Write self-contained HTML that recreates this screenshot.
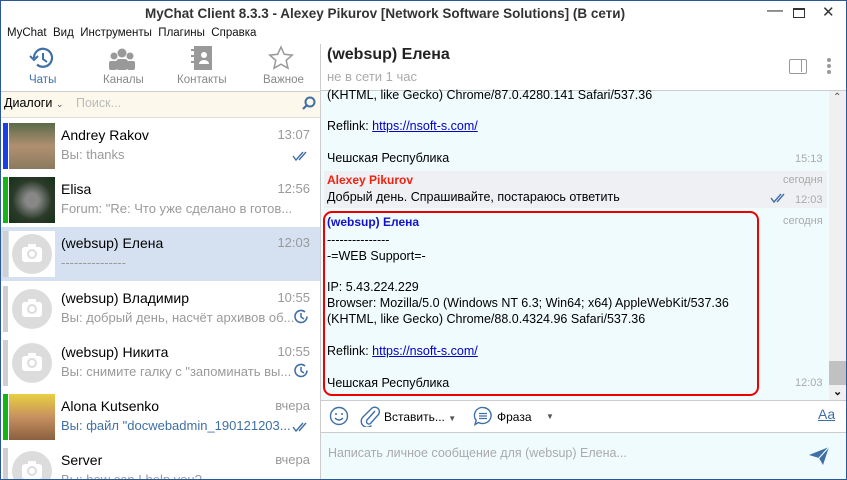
<!DOCTYPE html>
<html><head><meta charset="utf-8"><style>
*{margin:0;padding:0;box-sizing:border-box}
html,body{width:847px;height:480px;overflow:hidden}
body{font-family:"Liberation Sans","Noto Sans CJK SC",sans-serif;font-size:12px;background:#fff;color:#000}
#w{position:relative;width:847px;height:480px;overflow:hidden}
.a{position:absolute;white-space:nowrap}
.frame{position:absolute;left:0;top:0;width:847px;height:480px;border:1px solid #2b5797;pointer-events:none}
.g{color:#9a9a9a}
.row{position:absolute;left:0;width:320px;height:54px}
.bar{position:absolute;left:3px;top:4px;width:5px;height:46px}
.av{position:absolute;left:9px;top:4px;width:46px;height:46px;background:#fff}
.av .c{position:absolute;left:3px;top:3px;width:40px;height:40px;border-radius:50%;background:#dcdcdc}
.av .c i{position:absolute;left:10px;top:13px;width:20px;height:15px;background:#fff;border-radius:3px}
.av .c i:before{content:"";position:absolute;left:5px;top:2px;width:6px;height:6px;border-radius:50%;border:2.5px solid #dcdcdc}
.av .c i:after{content:"";position:absolute;left:6px;top:-3px;width:8px;height:4px;background:#fff;border-radius:1px}
.nm{position:absolute;left:61px;top:8px;font-size:14px}
.tm{position:absolute;right:10px;top:8px;font-size:13px;color:#999}
.pv{position:absolute;left:61px;top:28px;font-size:13px;color:#9a9a9a}
.ck{position:absolute;right:10px;top:32px}
.m{position:absolute;left:327px;font-size:12.5px}
</style></head><body><div id="w">
<div class="a" style="left:145px;top:6px;font-size:13.5px;font-weight:bold;color:#333">MyChat Client 8.3.3 - Alexey Pikurov [Network Software Solutions] (В сети)</div>
<div class="a" style="left:767px;top:2px;font-size:16px;color:#333">&#8212;</div>
<div class="a" style="left:793px;top:8px;width:12px;height:10px;border:1.5px solid #333;border-top-width:2.5px"></div>
<div class="a" style="left:822px;top:3px;font-size:15px;color:#333">&#10005;</div>
<div class="a" style="left:7px;top:27px;font-size:11.5px;color:#111">MyChat &nbsp;Вид &nbsp;Инструменты &nbsp;Плагины &nbsp;Справка</div>
<svg class="a" style="left:28px;top:45px" width="28" height="26" viewBox="0 0 28 26"><path d="M6 13a9 9 0 1 1 3 6.5" fill="none" stroke="#3f6fa7" stroke-width="2.2"/><path d="M2 11l4 4 4-4" fill="none" stroke="#3f6fa7" stroke-width="2"/><path d="M15 8v6l4 3" fill="none" stroke="#3f6fa7" stroke-width="2"/></svg>
<div class="a" style="left:29px;top:74px;font-size:11.5px;color:#3f6fa7">Чаты</div>
<svg class="a" style="left:108px;top:47px" width="28" height="24"><circle cx="14" cy="6" r="4.5" fill="#999"/><circle cx="6" cy="9" r="3.5" fill="#999"/><circle cx="22" cy="9" r="3.5" fill="#999"/><rect x="8" y="12" width="12" height="11" rx="3" fill="#999"/><rect x="1" y="14" width="8" height="9" rx="2" fill="#999"/><rect x="19" y="14" width="8" height="9" rx="2" fill="#999"/></svg>
<div class="a" style="left:103px;top:74px;font-size:11.5px;color:#888">Каналы</div>
<svg class="a" style="left:189px;top:45px" width="26" height="26"><rect x="5" y="1" width="18" height="24" fill="#999"/><rect x="2" y="4" width="5" height="2" fill="#999"/><rect x="2" y="10" width="5" height="2" fill="#999"/><rect x="2" y="16" width="5" height="2" fill="#999"/><circle cx="15" cy="10" r="3" fill="#fff"/><path d="M10 19a5 4 0 0 1 10 0z" fill="#fff"/></svg>
<div class="a" style="left:177px;top:74px;font-size:11.5px;color:#888">Контакты</div>
<svg class="a" style="left:268px;top:45px" width="26" height="26"><path d="M13 2l3.3 7.3 7.9.8-6 5.3 1.8 7.8L13 19.2 6 23.2l1.8-7.8-6-5.3 7.9-.8z" fill="none" stroke="#999" stroke-width="1.5"/></svg>
<div class="a" style="left:263px;top:74px;font-size:11.5px;color:#888">Важное</div>
<div class="a" style="left:1px;top:91px;width:319px;height:27px;background:#fdf8ec;border-top:1px solid #ccc;border-bottom:1px solid #ddd"></div>
<div class="a" style="left:4px;top:96px;font-size:12.5px">Диалоги <span style="font-size:9px;color:#555">&#8964;</span></div>
<div class="a" style="left:76px;top:96px;font-size:12.5px;color:#bbb">Поиск...</div>
<svg class="a" style="left:302px;top:96px" width="14" height="14"><circle cx="8" cy="6" r="4.5" fill="none" stroke="#3f6fa7" stroke-width="2"/><path d="M5 9l-4 4" stroke="#3f6fa7" stroke-width="2.2"/></svg>
<div class="a" style="left:320px;top:44px;width:1px;height:436px;background:#ccc"></div>
<div class="row" style="top:119px"><div class="bar" style="background:#1b3fe6"></div><div class="av" style="background:linear-gradient(#5a6a4a,#b09070 50%,#8a7a60)"></div><div class="nm">Andrey Rakov</div><div class="tm">13:07</div><div class="pv">Вы: thanks</div><svg class="ck" width="18" height="11"><path d="M1 5l3 4 7-8M7 9l7-8" fill="none" stroke="#3f6fa7" stroke-width="1.4"/></svg></div>
<div class="row" style="top:173px"><div class="bar" style="background:#16b516"></div><div class="av" style="background:radial-gradient(#888 20%,#2a3a2a 60%,#173017)"></div><div class="nm">Elisa</div><div class="tm">12:56</div><div class="pv">Forum: "Re: Что уже сделано в готов...</div></div>
<div class="row" style="top:227px;background:#d5e1f1"><div class="bar" style="background:#cfcfcf"></div><div class="av"><div class="c"><i></i></div></div><div class="nm">(websup) Елена</div><div class="tm">12:03</div><div class="pv">---------------</div></div>
<div class="row" style="top:282px"><div class="bar" style="background:#cfcfcf"></div><div class="av"><div class="c"><i></i></div></div><div class="nm">(websup) Владимир</div><div class="tm">10:55</div><div class="pv">Вы: добрый день, насчёт архивов об...</div><svg class="ck" style="top:26px" width="17" height="17"><path d="M14 8.5a6 6 0 1 1-2-4.5" fill="none" stroke="#3f6fa7" stroke-width="1.6"/><path d="M8 5v4l3 2" fill="none" stroke="#3f6fa7" stroke-width="1.5"/></svg></div>
<div class="row" style="top:336px"><div class="bar" style="background:#cfcfcf"></div><div class="av"><div class="c"><i></i></div></div><div class="nm">(websup) Никита</div><div class="tm">10:55</div><div class="pv">Вы: снимите галку с "запоминать вы...</div><svg class="ck" style="top:26px" width="17" height="17"><path d="M14 8.5a6 6 0 1 1-2-4.5" fill="none" stroke="#3f6fa7" stroke-width="1.6"/><path d="M8 5v4l3 2" fill="none" stroke="#3f6fa7" stroke-width="1.5"/></svg></div>
<div class="row" style="top:390px"><div class="bar" style="background:#16b516"></div><div class="av" style="background:linear-gradient(#e8d040,#c89060 50%,#8a6040)"></div><div class="nm">Alona Kutsenko</div><div class="tm">вчера</div><div class="pv" style="color:#3f6fa7">Вы: файл "docwebadmin_190121203...</div><svg class="ck" width="18" height="11"><path d="M1 5l3 4 7-8M7 9l7-8" fill="none" stroke="#3f6fa7" stroke-width="1.4"/></svg></div>
<div class="row" style="top:444px"><div class="bar" style="background:#cfcfcf"></div><div class="av"><div class="c"><i></i></div></div><div class="nm">Server</div><div class="tm">вчера</div><div class="pv">Вы: how can I help you?</div></div>
<div class="a" style="left:327px;top:46px;font-size:16px;font-weight:bold;color:#222">(websup) Елена</div>
<div class="a" style="left:327px;top:69px;font-size:13px;color:#aaa">не в сети 1 час</div>
<div class="a" style="left:789px;top:59px;width:18px;height:15px;border:1.5px solid #999;border-radius:2px"><div style="position:absolute;right:4px;top:0;width:1.5px;height:12px;background:#999"></div></div>
<div class="a" style="left:827px;top:58px;width:4px;height:4px;border-radius:50%;background:#999;box-shadow:0 6px 0 #999,0 12px 0 #999"></div>
<div class="a" style="left:321px;top:90px;width:526px;height:310px;background:#f0fbfd;border-top:1px solid #ccc"></div>
<div class="a" style="left:829px;top:91px;width:17px;height:309px;background:#f0f0f0"></div>
<div class="a" style="left:829px;top:361px;width:17px;height:24px;background:#c1c1c1"></div>
<div class="a" style="left:833px;top:92px;font-size:10px;color:#555">&#8963;</div>
<div class="a" style="left:833px;top:385px;font-size:11px;color:#111;font-weight:bold">&#8964;</div>
<div class="m" style="top:88px">(KHTML, like Gecko) Chrome/87.0.4280.141 Safari/537.36</div>
<div class="m" style="top:119px">Reflink: <span style="color:#00c;text-decoration:underline">https://nsoft-s.com/</span></div>
<div class="m" style="top:151px">Чешская Республика</div>
<div class="a g" style="left:795px;top:153px;font-size:11px;color:#aaa">15:13</div>
<div class="a" style="left:324px;top:171px;width:503px;height:37px;background:#eef0f3"></div>
<div class="m" style="top:173px;color:#e21;font-weight:bold;font-size:12px">Alexey Pikurov</div>
<div class="a" style="left:783px;top:174px;font-size:11px;color:#aaa">сегодня</div>
<div class="m" style="top:190px">Добрый день. Спрашивайте, постараюсь ответить</div>
<svg class="a" style="left:770px;top:193px" width="18" height="11"><path d="M1 5l3 4 7-8M7 9l7-8" fill="none" stroke="#3f6fa7" stroke-width="1.4"/></svg>
<div class="a" style="left:795px;top:194px;font-size:11px;color:#aaa">12:03</div>
<div class="a" style="left:323px;top:211px;width:436px;height:185px;border:2px solid #e00;border-radius:9px"></div>
<div class="m" style="top:215px;color:#11c;font-weight:bold;font-size:12px">(websup) Елена</div>
<div class="a" style="left:783px;top:215px;font-size:11px;color:#aaa">сегодня</div>
<div class="m" style="top:233px">---------------</div>
<div class="m" style="top:249px">-=WEB Support=-</div>
<div class="m" style="top:280px">IP: 5.43.224.229</div>
<div class="m" style="top:296px">Browser: Mozilla/5.0 (Windows NT 6.3; Win64; x64) AppleWebKit/537.36</div>
<div class="m" style="top:312px">(KHTML, like Gecko) Chrome/88.0.4324.96 Safari/537.36</div>
<div class="m" style="top:344px">Reflink: <span style="color:#00c;text-decoration:underline">https://nsoft-s.com/</span></div>
<div class="m" style="top:376px">Чешская Республика</div>
<div class="a" style="left:795px;top:377px;font-size:11px;color:#aaa">12:03</div>
<div class="a" style="left:321px;top:400px;width:526px;height:1px;background:#ccc"></div>
<svg class="a" style="left:329px;top:406px" width="20" height="20"><circle cx="10" cy="10" r="8.5" fill="none" stroke="#3f6fa7" stroke-width="1.4"/><circle cx="7" cy="8" r="1" fill="#3f6fa7"/><circle cx="13" cy="8" r="1" fill="#3f6fa7"/><path d="M6 12q4 4 8 0" fill="none" stroke="#3f6fa7" stroke-width="1.3"/></svg>
<svg class="a" style="left:360px;top:405px" width="20" height="22"><path d="M15 6L7 15a2.5 2.5 0 0 0 3.5 3.5L18 10a4.5 4.5 0 0 0-6.5-6.5L3 12a6 6 0 0 0 8.5 8.5" fill="none" stroke="#3f6fa7" stroke-width="1.4"/></svg>
<div class="a" style="left:384px;top:410px;font-size:12px">Вставить... <span style="font-size:8px;color:#555">&#9660;</span></div>
<svg class="a" style="left:473px;top:406px" width="20" height="20"><path d="M10 1.5a8.5 8 0 1 1-4.5 15L2 18.5l1.2-4A8 8 0 0 1 10 1.5z" fill="none" stroke="#3f6fa7" stroke-width="1.4"/><path d="M6 7.5h8M6 10h8M6 12.5h8" stroke="#3f6fa7" stroke-width="1.2"/></svg>
<div class="a" style="left:497px;top:410px;font-size:12px">Фраза</div>
<div class="a" style="left:546px;top:412px;font-size:8px;color:#555">&#9660;</div>
<div class="a" style="left:818px;top:406px;font-size:14px;color:#3f6fa7;text-decoration:underline">Aa</div>
<div class="a" style="left:321px;top:432px;width:526px;height:48px;background:#f0fbfd;border-top:1px solid #ccc"></div>
<div class="a" style="left:328px;top:446px;font-size:12.5px;color:#aaa">Написать личное сообщение для (websup) Елена...</div>
<svg class="a" style="left:808px;top:446px" width="22" height="20"><path d="M1 9L21 1 15 19 11 12z" fill="#3f6fa7"/><path d="M11 12L21 1" stroke="#f0fbfd" stroke-width="1.2"/></svg>
<div class="frame"></div>
</div></body></html>
